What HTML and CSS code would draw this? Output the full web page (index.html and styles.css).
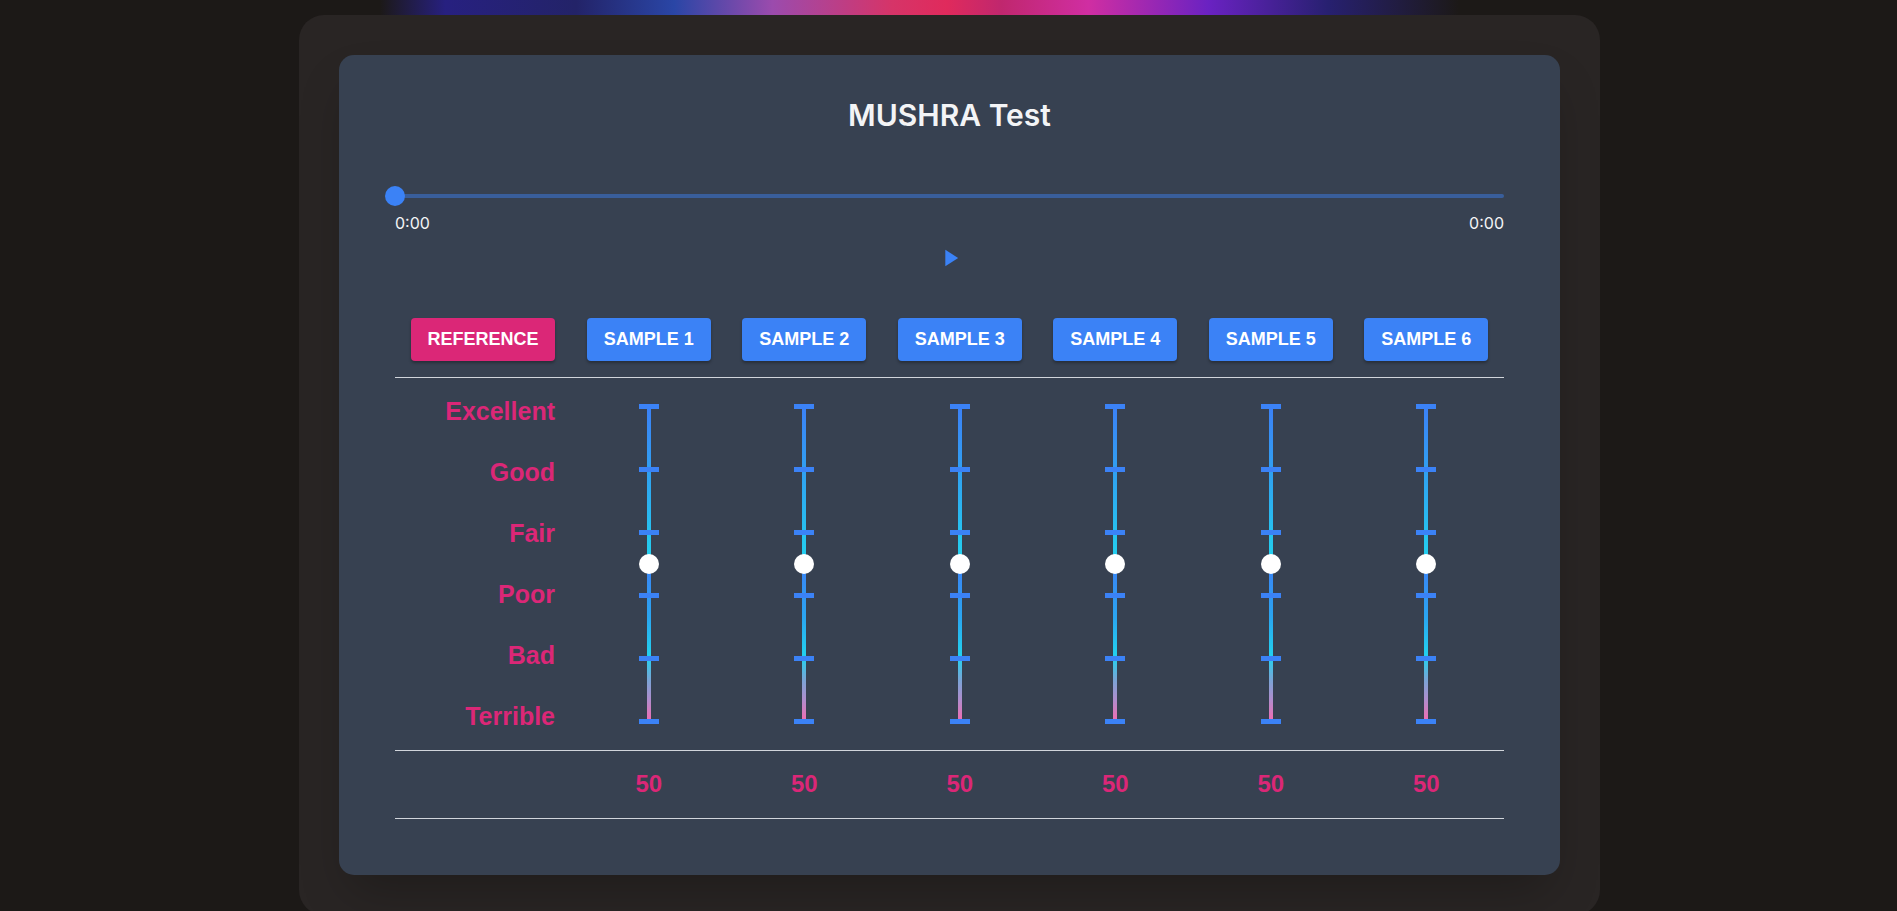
FILE: index.html
```html
<!DOCTYPE html>
<html lang="en">
<head>
<meta charset="utf-8">
<title>MUSHRA Test</title>
<link rel="stylesheet" href="styles.css">
</head>
<body>
<div class="glow"></div>
<main class="shell">
  <section class="card">
    <h1 class="title">MUSHRA Test</h1>

    <div class="progress">
      <div class="track"></div>
      <div class="knob"></div>
    </div>
    <div class="times"><span>0:00</span><span>0:00</span></div>
    <div class="play-row">
      <button class="play" aria-label="Play">
        <svg viewBox="0 0 24 24" width="28" height="28"><path d="M8 5v14l11-7z" fill="#3b82f6"/></svg>
      </button>
    </div>

    <div class="table">
      <div class="row head">
        <div class="cell"><button class="btn ref">REFERENCE</button></div>
        <div class="cell"><button class="btn">SAMPLE 1</button></div>
        <div class="cell"><button class="btn">SAMPLE 2</button></div>
        <div class="cell"><button class="btn">SAMPLE 3</button></div>
        <div class="cell"><button class="btn">SAMPLE 4</button></div>
        <div class="cell"><button class="btn">SAMPLE 5</button></div>
        <div class="cell"><button class="btn">SAMPLE 6</button></div>
      </div>

      <div class="row sliders">
        <div class="cell labels">
          <span>Excellent</span>
          <span>Good</span>
          <span>Fair</span>
          <span>Poor</span>
          <span>Bad</span>
          <span>Terrible</span>
        </div>
        <div class="cell"><div class="vslider"><div class="seg up"></div><div class="seg down"></div><i class="tick t0"></i><i class="tick t1"></i><i class="tick t2"></i><i class="tick t3"></i><i class="tick t4"></i><i class="tick t5"></i><b class="thumb"></b></div></div>
        <div class="cell"><div class="vslider"><div class="seg up"></div><div class="seg down"></div><i class="tick t0"></i><i class="tick t1"></i><i class="tick t2"></i><i class="tick t3"></i><i class="tick t4"></i><i class="tick t5"></i><b class="thumb"></b></div></div>
        <div class="cell"><div class="vslider"><div class="seg up"></div><div class="seg down"></div><i class="tick t0"></i><i class="tick t1"></i><i class="tick t2"></i><i class="tick t3"></i><i class="tick t4"></i><i class="tick t5"></i><b class="thumb"></b></div></div>
        <div class="cell"><div class="vslider"><div class="seg up"></div><div class="seg down"></div><i class="tick t0"></i><i class="tick t1"></i><i class="tick t2"></i><i class="tick t3"></i><i class="tick t4"></i><i class="tick t5"></i><b class="thumb"></b></div></div>
        <div class="cell"><div class="vslider"><div class="seg up"></div><div class="seg down"></div><i class="tick t0"></i><i class="tick t1"></i><i class="tick t2"></i><i class="tick t3"></i><i class="tick t4"></i><i class="tick t5"></i><b class="thumb"></b></div></div>
        <div class="cell"><div class="vslider"><div class="seg up"></div><div class="seg down"></div><i class="tick t0"></i><i class="tick t1"></i><i class="tick t2"></i><i class="tick t3"></i><i class="tick t4"></i><i class="tick t5"></i><b class="thumb"></b></div></div>
      </div>

      <div class="row scores">
        <div class="cell"></div>
        <div class="cell">50</div>
        <div class="cell">50</div>
        <div class="cell">50</div>
        <div class="cell">50</div>
        <div class="cell">50</div>
        <div class="cell">50</div>
      </div>
    </div>
  </section>
</main>
</body>
</html>
```
FILE: styles.css
```css
html, body {
  margin: 0;
  padding: 0;
  height: 100%;
  overflow: hidden;
  background: #1c1917;
}
body {
  position: relative;
  font-family: "Liberation Sans", Arial, sans-serif;
}
.glow {
  position: absolute;
  top: 0;
  left: 380px;
  width: 1090px;
  height: 15px;
  background: linear-gradient(90deg,
    rgba(38,32,122,0) 0%,
    #272080 6%,
    #232368 18%,
    #2a46a6 27%,
    #9b4bad 36%,
    #d63468 47%,
    #e02a5c 52%,
    #c0276e 57%,
    #d02ea2 65%,
    #6a22c2 76%,
    #272070 87%,
    rgba(38,32,112,0) 99%);
}
.shell {
  position: relative;
  z-index: 1;
  width: 1301px;
  box-sizing: border-box;
  margin: 15px 0 0 calc(50% - 649.5px);
  padding: 40px;
  background: #292524;
  border-radius: 25px;
}
.card {
  background: #374151;
  border-radius: 15px;
  padding: 40px 56px 56px;
  box-shadow: 0 25px 50px -12px rgba(0,0,0,0.25);
}
.title {
  margin: 0;
  font-family: Inter, "Liberation Sans", sans-serif;
  font-weight: 600;
  font-size: 30px;
  line-height: 40px;
  color: #f3f4f6;
  text-align: center;
}
.progress {
  position: relative;
  height: 20px;
  margin-top: 51px;
  display: flex;
  align-items: center;
}
.track {
  flex: 1;
  height: 4px;
  border-radius: 2px;
  background: rgba(59,130,246,0.45);
}
.knob {
  position: absolute;
  left: -10px;
  top: 0;
  width: 20px;
  height: 20px;
  border-radius: 50%;
  background: #3b82f6;
}
.times {
  margin-top: 5px;
  display: flex;
  justify-content: space-between;
  font-family: Inter, "Liberation Sans", sans-serif;
  font-size: 16px;
  line-height: 24px;
  color: #f3f4f6;
}
.play-row {
  margin-top: 1px;
  height: 44px;
  display: flex;
  justify-content: center;
}
.play {
  border: 0;
  background: none;
  padding: 8px;
  display: flex;
  cursor: pointer;
}
.table {
  margin-top: 22px;
}
.row {
  display: grid;
  grid-template-columns: 176px repeat(6, 1fr);
  border-bottom: 1px solid #d1d5db;
}
.cell {
  padding: 0 12px;
  display: flex;
  justify-content: center;
}
.head .cell {
  padding-top: 16px;
  padding-bottom: 16px;
}
.btn {
  flex-shrink: 0;
  white-space: nowrap;
  height: 43px;
  padding: 0 17px;
  border: 0;
  border-radius: 4px;
  background: #3b82f6;
  color: #ffffff;
  font-family: "Liberation Sans", Arial, sans-serif;
  font-weight: 700;
  font-size: 18px;
  box-shadow: 0 2px 3px rgba(0,0,0,0.3);
  cursor: pointer;
}
.btn.ref {
  background: #db2777;
  padding: 0 16px;
}
.sliders .cell {
  padding-top: 26px;
  padding-bottom: 26px;
}
.sliders .labels {
  flex-direction: column;
  align-items: flex-end;
  justify-content: flex-start;
  gap: 33px;
  padding: 19px 16px 0;
}
.labels span {
  font-weight: 700;
  font-size: 25px;
  line-height: 28px;
  color: #db2777;
}
.vslider {
  position: relative;
  width: 20px;
  height: 320px;
  display: flex;
  flex-direction: column;
  align-items: center;
}
.seg {
  width: 4px;
  flex: 1;
}
.seg.up {
  margin-top: 5px;
  background: linear-gradient(180deg, #3b82f6 0%, #2fa4f1 45%, #22d3ee 100%);
}
.seg.down {
  margin-bottom: 5px;
  background: linear-gradient(180deg, #3b82f6 0%, #2aa6f0 35%, #22d3ee 60%, #7aa4d6 75%, #b28ccc 88%, #ec6fb4 100%);
}
.tick {
  position: absolute;
  left: 0;
  width: 20px;
  height: 5px;
  background: #3b82f6;
}
.t0 { top: 0; }
.t1 { top: 63px; }
.t2 { top: 126px; }
.t3 { top: 189px; }
.t4 { top: 252px; }
.t5 { top: 315px; }
.thumb {
  position: absolute;
  left: 0;
  top: 150px;
  width: 20px;
  height: 20px;
  border-radius: 50%;
  background: #ffffff;
}
.scores .cell {
  padding-top: 19px;
  padding-bottom: 20px;
  font-weight: 700;
  font-size: 24px;
  line-height: 28px;
  color: #db2777;
}
```
